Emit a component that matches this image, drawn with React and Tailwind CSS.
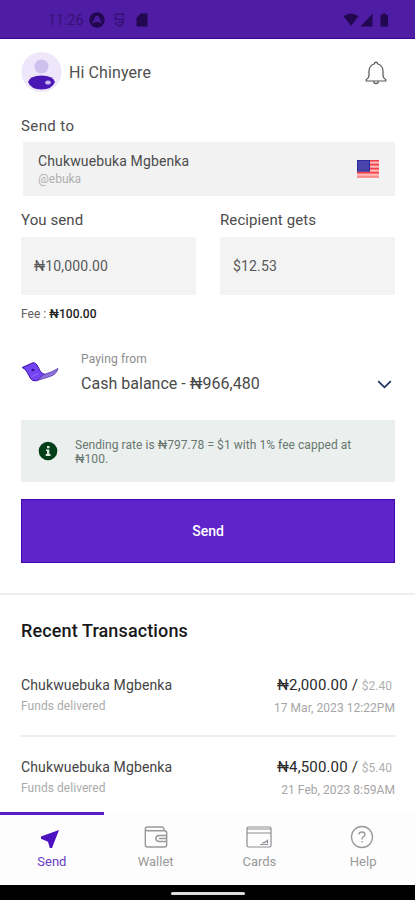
import React from "react";

function StatusBar() {
  return (
    <div className="flex h-[39px] shrink-0 items-center border-b border-[#3a0592] bg-[#4f1ca4] pl-[48px] pr-[26px] pt-[2px] text-[#351275]">
      <span className="w-[41px] whitespace-nowrap text-[14px] leading-none tracking-[0.15px]">11:26</span>
      <svg width="16" height="16" viewBox="0 0 16 16">
        <circle cx="8" cy="8" r="7.7" fill="#220850" />
        <path d="M4 11 7 5.3Q8 3.8 9 5.3L12 11M6.4 10 8 7.4 9.6 10" fill="none" stroke="#4f1ca4" strokeWidth="1.6" />
      </svg>
      <svg className="ml-[9px]" width="11" height="14" viewBox="0 0 11 14" fill="none" stroke="#351275" strokeWidth="1.4">
        <path d="M9.500 4V1.200H1.300V6.300H9.500V8.500Q9 12 5.500 13Q2 12 1.300 8.800M4 9.300H9" />
      </svg>
      <svg className="ml-[11px]" width="12" height="14" viewBox="0 0 12 14">
        <path d="M4.5 .5H10.5Q11.5 .5 11.5 1.5V12.5Q11.5 13.5 10.5 13.5H1.5Q.5 13.5 .5 12.5V5Z" fill="#220850" />
      </svg>
      <svg className="ml-auto" width="46" height="14" viewBox="0 0 46 14" fill="#220850">
        <path d="M.5 3.2Q8 -2.2 15.5 3.2L8 13Z" />
        <path d="M29.500 .5V13.500H17.500Z" />
        <path d="M37.500 2H39.500V.5H43V2H45V13.500H37.500Z" />
      </svg>
    </div>
  );
}

function Header() {
  return (
    <header className="flex h-[67px] shrink-0 items-center pl-[21px] pr-[28px]">
      <svg width="41" height="41" viewBox="0 0 41 41">
        <circle cx="20.500" cy="20" r="20" fill="#eee6fa" />
        <circle cx="20.500" cy="14.500" r="7" fill="#cfc0ee" />
        <path d="M7 30Q9 23.500 20.500 23.500T34 30Q31 37.500 20.500 37.500T7 30Z" fill="#4a16b4" />
        <ellipse cx="27" cy="30.500" rx="2.800" ry="2" fill="#c9b6f0" />
      </svg>
      <h1 className="ml-[7px] text-[16px] leading-none tracking-[0.1px] text-[#505050]">Hi Chinyere</h1>
      <svg className="ml-auto" width="22" height="24" viewBox="0 0 22 24" fill="none" stroke="#555" strokeWidth="1.200">
        <path d="M11 1.200Q9.600 1.300 9.500 2.800Q4 4.600 4 10V15Q4 17 1.300 18.500V20H20.700V18.500Q18 17 18 15V10Q18 4.600 12.500 2.800Q12.400 1.300 11 1.200Z" />
        <path d="M8.500 20.500Q9 22.700 11 22.700T13.500 20.500" />
      </svg>
    </header>
  );
}

function Flag() {
  return (
    <svg width="22" height="18" viewBox="0 0 22 18">
      <rect width="22" height="18" fill="#ffb9b9" />
      <path d="M0 .7H22M0 4.700H22M0 8.600H22M0 12.600H22" stroke="#f23c46" strokeWidth="1.700" />
      <path d="M0 16.800H22" stroke="#fa8b8b" strokeWidth="2" />
      <rect width="13" height="11.500" fill="#4844ac" />
      <rect x=".5" y=".5" width="12" height="10.500" fill="none" stroke="#2d2b9c" />
    </svg>
  );
}

function Amount({ label, value }) {
  return (
    <div className="w-[175px]">
      <div className="h-[41px] pt-[13px] text-[15px] leading-[22px] tracking-[0.1px] text-[#4c4c4c]">{label}</div>
      <div className="flex h-[58px] items-center bg-[#f3f3f3] pl-[13px] pt-[1px] text-[14px] tracking-[0.15px] text-[#585858]">{value}</div>
    </div>
  );
}

function Transaction({ amount, usd, date }) {
  return (
    <div className="flex justify-between pt-[9px]">
      <div>
        <div className="text-[14px] leading-[20px] tracking-[0.13px] text-[#444]">Chukwuebuka Mgbenka</div>
        <div className="text-[12px] leading-[22px] tracking-[0.05px] text-[#ababab]">Funds delivered</div>
      </div>
      <div className="text-right">
        <div className="pr-[3px] text-[15px] leading-[21px] tracking-[0.15px] text-[#2a2a2a]">
          {amount} / <span className="text-[12px] tracking-[0px] text-[#b0b0b0]">{usd}</span>
        </div>
        <div className="text-[12px] leading-[22px] tracking-[0.05px] text-[#a6a6a6]">{date}</div>
      </div>
    </div>
  );
}

function Tab({ label, active, children }) {
  return (
    <div className={"flex w-1/4 flex-col items-center border-t-[3px] pt-[9px] " + (active ? "border-[#5a1fc4] text-[#6a3bc9]" : "border-transparent text-[#999]")}>
      <div className="flex h-[26px] items-center">{children}</div>
      <span className="mt-[2px] text-[13px] leading-[20px]">{label}</span>
    </div>
  );
}

export default function App() {
  return (
    <div className="flex h-[900px] w-[415px] flex-col overflow-hidden bg-white font-['Roboto',sans-serif]">
      <StatusBar />
      <Header />
      <main className="flex h-[487px] shrink-0 flex-col pl-[21px] pr-[20px]">
        <div className="h-[36px] pt-[10px] text-[15px] leading-[21px] tracking-[0.4px] text-[#4c4c4c]">Send to</div>
        <div className="ml-[2px] flex h-[54px] items-center justify-between bg-[#f2f2f2] pl-[15px] pr-[16px]">
          <div className="pt-[2px]">
            <div className="text-[14px] leading-[18px] tracking-[0.13px] text-[#4c4c4c]">Chukwuebuka Mgbenka</div>
            <div className="text-[12px] leading-[18px] text-[#b0b0b0]">@ebuka</div>
          </div>
          <Flag />
        </div>
        <div className="flex justify-between">
          <Amount label="You send" value="₦10,000.00" />
          <Amount label="Recipient gets" value="$12.53" />
        </div>
        <div className="pt-[11px] text-[12px] leading-[16px] tracking-[0.03px] text-[#5c5c5c]">
          Fee : <span className="font-medium text-[#222]">₦100.00</span>
        </div>
        <div className="mt-[27px] flex items-center">
          <svg className="mb-[2px]" width="38" height="22" viewBox="0 0 38 22">
            <path d="M1.200 6.500 12 1.700Q14.500 1.600 16 4L19.500 10.500Q21 13 26 14L15.500 19.800Q11 20.500 9.500 17.500L6 11Q4 7.500 1.200 6.500Z" fill="#7444f2" stroke="#3b12a5" strokeLinejoin="round" />
            <path d="M16 19.600 23 13.500Q31 11 37 7.500Q35.500 13.500 29 15.500Q21 18 16 19.600Z" fill="#8f76d6" stroke="#5a34b4" strokeWidth=".8" strokeLinejoin="round" />
            <ellipse cx="12" cy="9" rx="1.600" ry="1.300" fill="#3a0fa0" />
            <path d="M10 16 17.500 12.500" stroke="#8d68f5" strokeWidth="1" />
          </svg>
          <div className="ml-[22px]">
            <div className="text-[12px] leading-[21px] tracking-[0.15px] text-[#8c8c8c]">Paying from</div>
            <div className="pt-[1px] text-[16px] leading-[26px] tracking-[0.02px] text-[#4a4a4a]">Cash balance - ₦966,480</div>
          </div>
          <svg className="ml-auto mr-[3px] mt-[22px]" width="15" height="9" viewBox="0 0 15 9" fill="none" stroke="#1d3763" strokeWidth="1.800">
            <path d="M1.200 1.200 7.500 7.300 13.800 1.200" />
          </svg>
        </div>
        <div className="mt-[23px] flex h-[62px] shrink-0 items-center bg-[#ebefee] pl-[17px]">
          <svg width="20" height="20" viewBox="0 0 20 20">
            <circle cx="10" cy="10" r="9.300" fill="#034019" />
            <path d="M9 5H11.500V7.200H9ZM8 8.500H11.300V13H12.500V15H7.700V13H9V10H8Z" fill="#dce9df" />
          </svg>
          <p className="ml-[17px] w-[300px] pt-[2px] text-[12px] leading-[14px] tracking-[0.05px] text-[#68776f]">
            Sending rate is ₦797.78 = $1 with 1% fee capped at ₦100.
          </p>
        </div>
        <button className="mt-[17px] h-[64px] shrink-0 border border-[#4206b8] bg-[#5f25ca] pt-[1px] text-[14px] font-medium text-white">Send</button>
      </main>
      <section className="h-[219px] shrink-0 border-t-2 border-[#eeeeee] pl-[21px] pr-[20px]">
        <h2 className="pt-[24px] text-[18px] font-medium leading-[24px] tracking-[0.12px] text-[#181818]">Recent Transactions</h2>
        <div className="mt-[23px] h-[71px] border-b-2 border-[#ededed]">
          <Transaction amount="₦2,000.00" usd="$2.40" date="17 Mar, 2023 12:22PM" />
        </div>
        <div className="pt-[11px]">
          <Transaction amount="₦4,500.00" usd="$5.40" date="21 Feb, 2023 8:59AM" />
        </div>
      </section>
      <nav className="flex h-[73px] shrink-0 bg-[#fdfdfd]">
        <Tab label="Send" active>
          <svg className="mr-[4px] mt-[3px]" width="20" height="20" viewBox="0 0 20 20" fill="#4c12c0">
            <path d="M19 1 12 19H9.800L8 12.800 1 9.800V7.500Z" />
          </svg>
        </Tab>
        <Tab label="Wallet">
          <svg width="24" height="24" viewBox="0 0 24 24" fill="none" stroke="#999" strokeWidth="1.400">
            <path d="M20 5.500V3.500L18.500 2H3.500Q1.300 2 1.300 4V19.500Q1.300 22 3.500 22H20.500Q22.700 22 22.700 19.500V8Q22.700 5.700 20.500 5.700H3.500Q1.300 5.700 1.300 4" />
            <path d="M22.500 10.500H15Q11.800 10.800 11.800 13.500T15 16.500H22.500M15 13.500H22" />
          </svg>
        </Tab>
        <Tab label="Cards">
          <svg width="26" height="24" viewBox="0 0 26 24" fill="none" stroke="#8d8d93" strokeWidth="1.200">
            <rect x="1" y="2" width="24" height="20" rx="1.500" />
            <path d="M1 4H25M1 8H25M14 19.500H22M16 18Q19 18 21.500 15.500V18.500" />
          </svg>
        </Tab>
        <Tab label="Help">
          <svg className="mr-[2px]" width="24" height="24" viewBox="0 0 24 24" fill="none" stroke="#999" strokeWidth="1.300">
            <circle cx="12" cy="12" r="10.500" />
            <path d="M9 9.500Q9 7 12 7T15 9.500Q15 11 13.500 11.700Q12 12.400 12 14V14.500M12 16V17.500" />
          </svg>
        </Tab>
      </nav>
      <div className="flex h-[15px] shrink-0 justify-center bg-black pt-[7px]">
        <div className="h-[3px] w-[74px] rounded-full bg-[#ddd]" />
      </div>
    </div>
  );
}
